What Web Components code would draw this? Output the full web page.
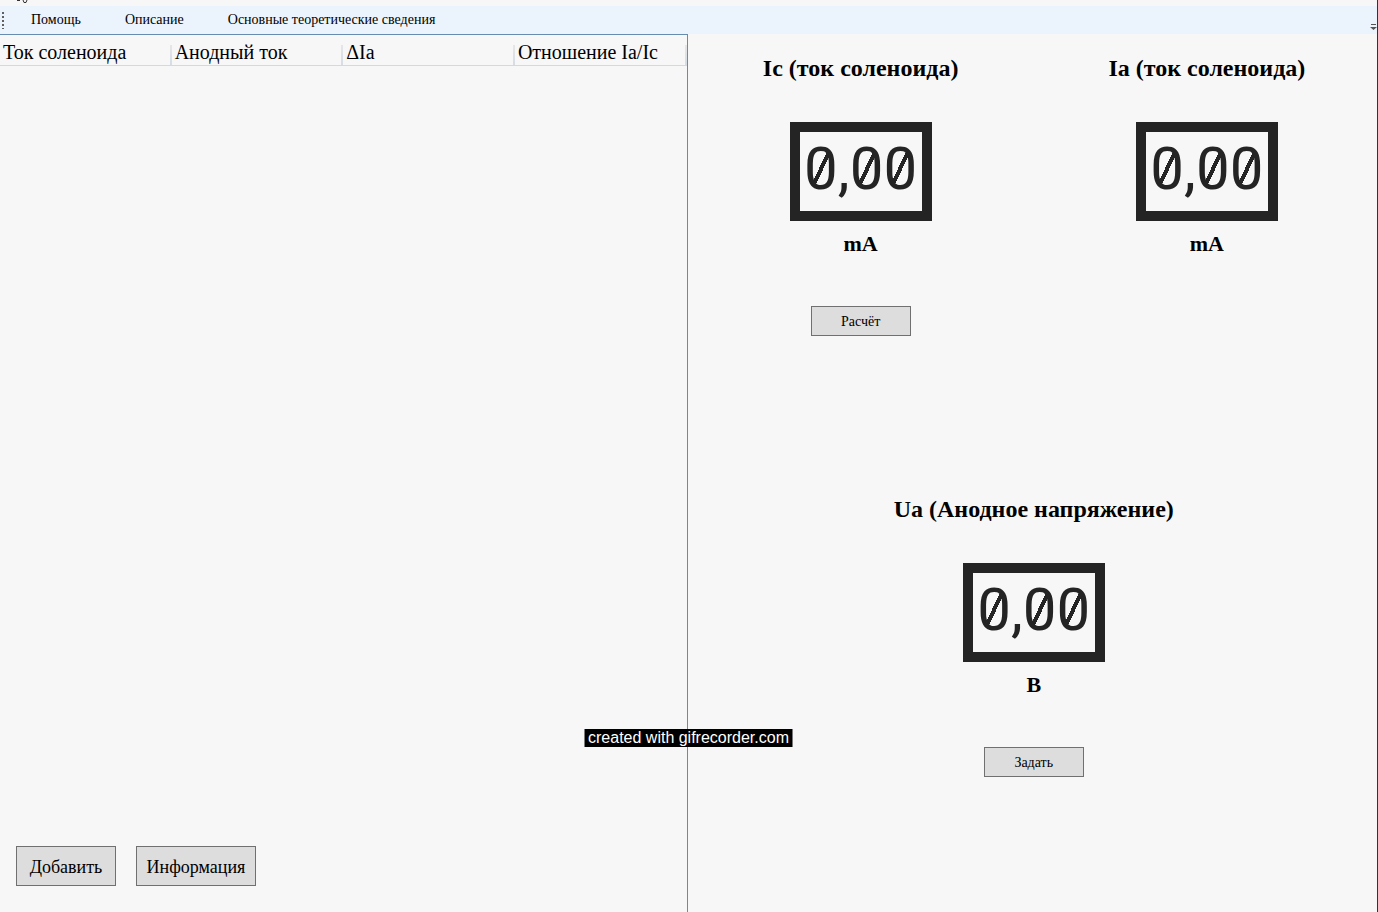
<!DOCTYPE html>
<html lang="ru">
<head>
<meta charset="utf-8">
<title>Лабораторная работа</title>
<style>
  html, body { height: 100%; }
  body { margin: 0; background: #f7f7f7; color: #000; font-family: "Liberation Serif", "Times New Roman", serif; overflow: hidden; }
</style>
</head>
<body>
<lab-app></lab-app>
<script>
const define = (name, html, setup) => customElements.define(name, class extends HTMLElement {
  constructor() {
    super();
    this.attachShadow({ mode: 'open' }).innerHTML = html;
  }
  connectedCallback() { if (setup) setup(this, this.shadowRoot); }
});

define('window-edge', `
  <style>
    :host { display: block; height: 6px; }
    svg { display: block; margin-left: 16px; }
  </style>
  <svg width="14" height="4" aria-hidden="true" fill="none" stroke="#333">
    <path d="M1 .5h3M7 0l1 2.500h2L11 0"/>
  </svg>`);

define('tool-bar', `
  <style>
    :host { display: flex; align-items: center; height: 28px; box-sizing: border-box; background: #ebf4fc; position: relative; }
    .grip { width: 2px; height: 17px; margin: 0 27px 0 2px; background: repeating-linear-gradient(#606060 0 2px, transparent 2px 4px); }
    nav { display: flex; gap: 44px; }
    .more { position: absolute; right: 0; bottom: 3px; width: 7px; height: 8px; padding: 0; border: 0; background: none; }
    .more svg { display: block; }
  </style>
  <span class="grip"></span>
  <nav><slot></slot></nav>
  <button class="more" type="button" aria-label="Ещё">
    <svg width="7" height="8" fill="#555"><path d="M1 1h5v1H1zM0 4h7L3.500 7z"/></svg>
  </button>`);

define('menu-link', `
  <style>
    :host { display: block; }
    a { display: block; color: #000; text-decoration: none; font-size: 14px; line-height: 18px; }
  </style>
  <a href="#"><slot></slot></a>`);

define('data-grid', `
  <style>
    :host { display: block; }
    table { width: 100%; border-collapse: separate; border-spacing: 0; table-layout: fixed; }
    th { box-sizing: border-box; height: 31px; padding: 3px 2px 0 3px; text-align: left; font-weight: 400; font-size: 20px; line-height: 26px; white-space: nowrap; border-bottom: 1px solid #d5d9dd;
      background: linear-gradient(#e6e6e6, #d3dde8) right bottom / 2px 20px no-repeat; }
  </style>
  <table><thead><tr>
    <th scope="col">Ток соленоида</th><th scope="col">Анодный ток</th><th scope="col">ΔIa</th><th scope="col">Отношение Ia/Ic</th>
  </tr></thead></table>`);

define('push-button', `
  <style>
    :host { display: block; }
    button { display: block; box-sizing: border-box; width: 100px; height: 30px; padding: 2px 0 0; border: 1px solid #707070; background: #ddd; color: #000; font: 14px "Liberation Serif", serif; }
    :host([size="large"]) button { height: 40px; font-size: 18px; }
    :host([wide]) button { width: 120px; }
  </style>
  <button type="button"><slot></slot></button>`);

define('digit-display', `
  <style>
    :host { display: block; }
    output { display: block; box-sizing: border-box; width: 142px; height: 99px; border: 10px solid #242424; color: #242424; font: 400 60px/74px Roboto, sans-serif; text-align: center; white-space: nowrap; }
    .digit { display: inline-block; background: linear-gradient(to bottom right, transparent calc(50% - 2px), #242424 calc(50% - 2px) calc(50% + 2px), transparent calc(50% + 2px)) center / 16px 34px no-repeat; }
  </style>
  <output></output>`, (host, root) => {
  const out = root.querySelector('output');
  out.replaceChildren(...[...host.getAttribute('value')].map(ch => {
    const s = document.createElement('span');
    s.textContent = ch;
    if (ch === '0') s.className = 'digit';
    return s;
  }));
});

define('meter-panel', `
  <style>
    :host { display: flex; flex-direction: column; align-items: center; min-width: 0; }
    h2, p { margin: 0; font-size: 24px; line-height: 28px; font-weight: 700; white-space: nowrap; }
    h2 { padding: 20px 0 40px; }
    p { padding: 9px 0 48px; font-size: 22px; }
  </style>
  <h2></h2>
  <digit-display value="0,00"></digit-display>
  <p></p>
  <slot></slot>`, (host, root) => {
  root.querySelector('h2').textContent = host.getAttribute('label');
  root.querySelector('p').textContent = host.getAttribute('unit');
});

define('recorder-badge', `
  <style>
    :host { display: block; position: absolute; left: 50%; bottom: 165px; transform: translateX(-50%); background: #000; color: #fff; padding: 0 4px; font: 16px/18px "Liberation Sans", Arial, sans-serif; white-space: nowrap; }
  </style>
  <slot></slot>`);

define('lab-app', `
  <style>
    :host { display: flex; flex-direction: column; position: relative; min-height: 100vh; box-sizing: border-box; border-right: 1px solid #333; }
    main { flex: 1; display: grid; grid-template-columns: calc(50% - 1px) 1fr; }
    .records { display: flex; flex-direction: column; justify-content: space-between; box-sizing: border-box; border: solid #688caf; border-width: 1px 1px 0 0; }
    .actions { display: flex; gap: 20px; padding: 0 16px 26px; }
    .meters { display: grid; grid-template: 1fr 1fr / 1fr 1fr; margin: 0 -3px -4px 0; }
    .both { grid-column: 1 / -1; }
  </style>
  <window-edge></window-edge>
  <tool-bar><menu-link>Помощь</menu-link><menu-link>Описание</menu-link><menu-link>Основные теоретические сведения</menu-link></tool-bar>
  <main>
    <section class="records">
      <data-grid></data-grid>
      <div class="actions">
        <push-button size="large">Добавить</push-button>
        <push-button size="large" wide>Информация</push-button>
      </div>
    </section>
    <section class="meters">
      <meter-panel label="Ic (ток соленоида)" unit="mA"><push-button>Расчёт</push-button></meter-panel>
      <meter-panel label="Ia (ток соленоида)" unit="mA"></meter-panel>
      <meter-panel class="both" label="Ua (Анодное напряжение)" unit="В"><push-button>Задать</push-button></meter-panel>
    </section>
  </main>
  <recorder-badge>created with gifrecorder.com</recorder-badge>`);
</script>
</body>
</html>
